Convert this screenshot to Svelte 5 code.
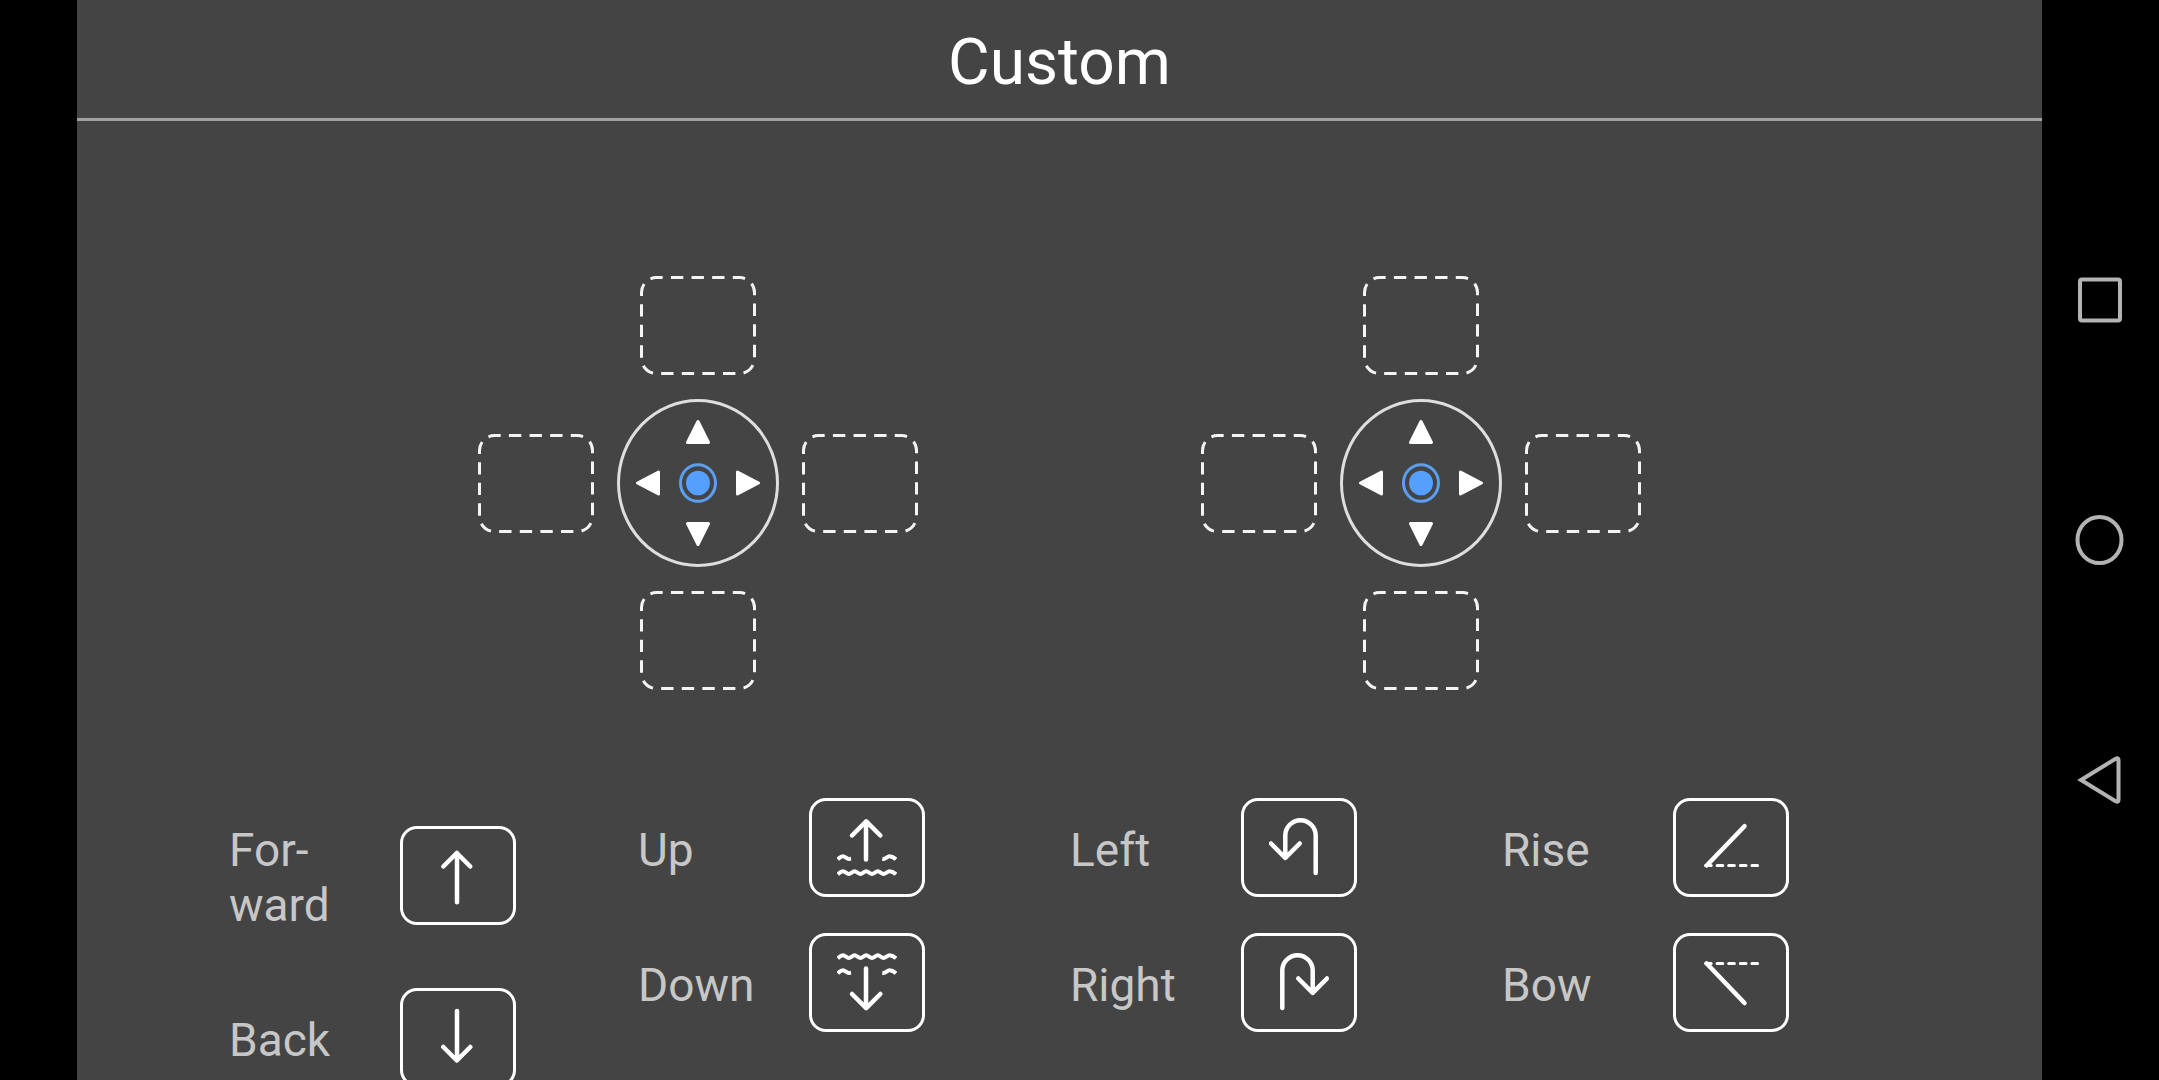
<script>
	let selected = $state('');

	const slots = ['up', 'left', 'right', 'down'];
	const pads = ['Left stick', 'Right stick'];

	const wave =
		'M.7 57.3C2.7 55.5 4 54.2 6 54.2S9.8 57 11.8 57S15.7 54.2 17.6 54.2S21.5 57 23.4 57S27.3 54.2 29.2 54.2S33.1 57 35 57S38.9 54.2 40.8 54.2S44.7 57 46.6 57S50.5 54.2 52.4 54.2S57 55.5 59 57.3';
	const ripples =
		'M.7 42.3C2.7 40.5 4 39.2 6 39.2S9.8 42 11.8 42L14 41.6M45.3 41.8L46.6 42C48.6 42 50.5 39.2 52.4 39.2S57 40.5 59 42.3';

	const columns = [
		[
			{ label: 'For-ward', icon: 'forward' },
			{ label: 'Back', icon: 'back' }
		],
		[
			{ label: 'Up', icon: 'up' },
			{ label: 'Down', icon: 'down' }
		],
		[
			{ label: 'Left', icon: 'left' },
			{ label: 'Right', icon: 'right' }
		],
		[
			{ label: 'Rise', icon: 'rise' },
			{ label: 'Bow', icon: 'bow' }
		]
	];

	/**
	 * @param {string} name
	 */
	function select(name) {
		selected = selected === name ? '' : name;
	}
</script>

<div class="device">
	<main>
		<header>
			<h1>Custom</h1>
		</header>

		<section class="pads">
			{#each pads as pad}
				<div class="pad">
					{#each slots as slot}
						<button class="slot {slot}" aria-label="{pad} {slot}">
							<svg viewBox="0 0 116 99">
								<rect x="1.5" y="1.5" width="113" height="96" rx="15" pathLength="190" />
							</svg>
						</button>
					{/each}
					<svg class="stick" viewBox="0 0 162 168">
						<ellipse class="rim" cx="81" cy="84" rx="79.5" ry="82.5" />
						<path class="arrow" d="M81 22.5L91.5 43.5H70.5Z" />
						<path class="arrow" d="M81 145.5L91.5 124.5H70.5Z" />
						<path class="arrow" d="M20.5 84L41.5 73V95Z" />
						<path class="arrow" d="M141.5 84L120.5 73V95Z" />
						<ellipse class="ring" cx="81" cy="84" rx="17.5" ry="18.3" />
						<ellipse class="dot" cx="81" cy="84" rx="12" ry="12.3" />
					</svg>
				</div>
			{/each}
		</section>

		<!-- Actions that can be put in a slot -->
		<section class="controls">
			{#each columns as column}
				<div class="column">
					{#each column as item}
						<div class="control">
							<label for={item.icon}>{item.label}</label>
							<button
								id={item.icon}
								class="action"
								aria-pressed={selected === item.icon}
								onclick={() => select(item.icon)}
							>
								<svg viewBox="0 0 60 61">
									{#if item.icon === 'forward'}
										<path d="M29 57.2V8M15.3 21.5L28.8 8L42.3 21.5" />
									{:else if item.icon === 'back'}
										<path d="M29 4V53.3M15.3 40L28.8 53.5L42.3 40" />
									{:else if item.icon === 'up'}
										<path d="M29 42.5V4.5M15 18.5L29.2 4.3L43.4 18.5" />
										<path class="water" d={ripples} />
										<path class="water" d={wave} />
									{:else if item.icon === 'down'}
										<path d="M29 16.5V55.5M15 42L29.2 56.2L43.4 42" />
										<path class="water" d={wave} transform="translate(0 -51)" />
										<path class="water" d={ripples} transform="translate(0 -21)" />
									{:else if item.icon === 'left'}
										<path d="M2 26.5L16.3 40.8L30.7 26.5M16.3 40V18.5A15.2 15.2 0 0 1 46.7 18.5V56" />
									{:else if item.icon === 'right'}
										<path d="M58 26.5L43.7 40.8L29.3 26.5M43.7 40V18.5A15.2 15.2 0 0 0 13.3 18.5V56" />
									{:else if item.icon === 'rise'}
										<path d="M5.7 48.5L43.5 9.2" />
										<path class="level" d="M4.5 48.5H57" />
									{:else}
										<path d="M5.7 11.5L43.5 51" />
										<path class="level" d="M4.5 11.5H57" />
									{/if}
								</svg>
							</button>
						</div>
					{/each}
				</div>
			{/each}
		</section>
	</main>

	<nav>
		<button aria-label="Recent apps">
			<svg viewBox="0 0 52 52"><rect x="5" y="5.5" width="40" height="41" rx="2" /></svg>
		</button>
		<button aria-label="Home">
			<svg viewBox="0 0 52 52"><ellipse cx="24.5" cy="26" rx="22" ry="23" /></svg>
		</button>
		<button aria-label="Back">
			<svg viewBox="0 0 52 52"><path d="M6 26L41 4.5Q43.5 3.5 43.5 6V46Q43.5 48.5 41 47.5Z" /></svg>
		</button>
	</nav>
</div>

<style>
	:global(body) {
		margin: 0;
		background: #000;
	}
	.device {
		display: flex;
		height: 100vh;
		padding-left: 77px;
		box-sizing: border-box;
		overflow: hidden;
		background: #000;
		font-family: Roboto, sans-serif;
	}
	main {
		flex: 1;
		min-width: 0;
		background: #444;
	}
	header {
		padding: 25px 0 17px;
		border-bottom: 3px solid #a2a0a1;
	}
	h1 {
		margin: 0;
		color: #fff;
		font-size: 64px;
		font-weight: 400;
		line-height: 76px;
		text-align: center;
	}
	button {
		padding: 0;
		border: none;
		background: none;
		cursor: pointer;
	}
	svg {
		display: block;
		fill: none;
	}

	.pads {
		display: flex;
		justify-content: center;
		gap: 283px;
		padding: 155px 0 108px;
	}
	.pad {
		display: grid;
		grid-template:
			'. up .' 99px
			'left stick right' 168px
			'. down .' 99px / 116px 162px 116px;
		gap: 24px 23px;
		place-items: center;
	}
	.slot {
		width: 116px;
		height: 99px;
	}
	.slot rect {
		stroke: #f4f4f4;
		stroke-width: 3;
		stroke-dasharray: 6 4;
		stroke-dashoffset: 3;
	}
	.up {
		grid-area: up;
	}
	.left {
		grid-area: left;
	}
	.right {
		grid-area: right;
	}
	.down {
		grid-area: down;
	}
	.stick {
		grid-area: stick;
		width: 162px;
		height: 168px;
	}
	.rim {
		stroke: #dedede;
		stroke-width: 3;
	}
	.arrow {
		fill: #fff;
		stroke: #fff;
		stroke-width: 3;
		stroke-linejoin: round;
	}
	.ring {
		stroke: #5a9ff0;
		stroke-width: 3;
	}
	.dot {
		fill: #549fff;
	}

	/* columns line up on the first line of their first label */
	.controls {
		display: grid;
		grid-template-columns: 409fr 432fr 432fr 432fr;
		align-items: baseline;
		padding: 0 108px 0 152px;
	}
	.column {
		display: flex;
		flex-direction: column;
		gap: 36px;
	}
	.column:first-child {
		gap: 55px;
	}
	.control {
		display: flex;
		align-items: center;
	}
	label {
		width: 171px;
		padding-top: 6px;
		color: #c7c7c7;
		font-size: 46px;
		line-height: 55px;
	}
	.action {
		display: flex;
		align-items: center;
		justify-content: center;
		width: 116px;
		height: 99px;
		box-sizing: border-box;
		border: 3px solid #fff;
		border-radius: 17px;
	}
	.action svg {
		width: 60px;
		height: 61px;
		stroke: #fff;
		stroke-width: 4.5;
		stroke-linecap: round;
		stroke-linejoin: round;
	}
	.action .water {
		stroke-width: 4;
		stroke-linecap: butt;
	}
	.action .level {
		stroke-width: 3;
		stroke-dasharray: 5.7 5.9;
	}

	nav {
		display: flex;
		flex-direction: column;
		justify-content: center;
		width: 117px;
	}
	nav button {
		display: flex;
		align-items: center;
		justify-content: center;
		height: 240px;
	}
	nav svg {
		width: 52px;
		height: 52px;
		stroke: #b3b3b3;
		stroke-width: 4;
	}
</style>
